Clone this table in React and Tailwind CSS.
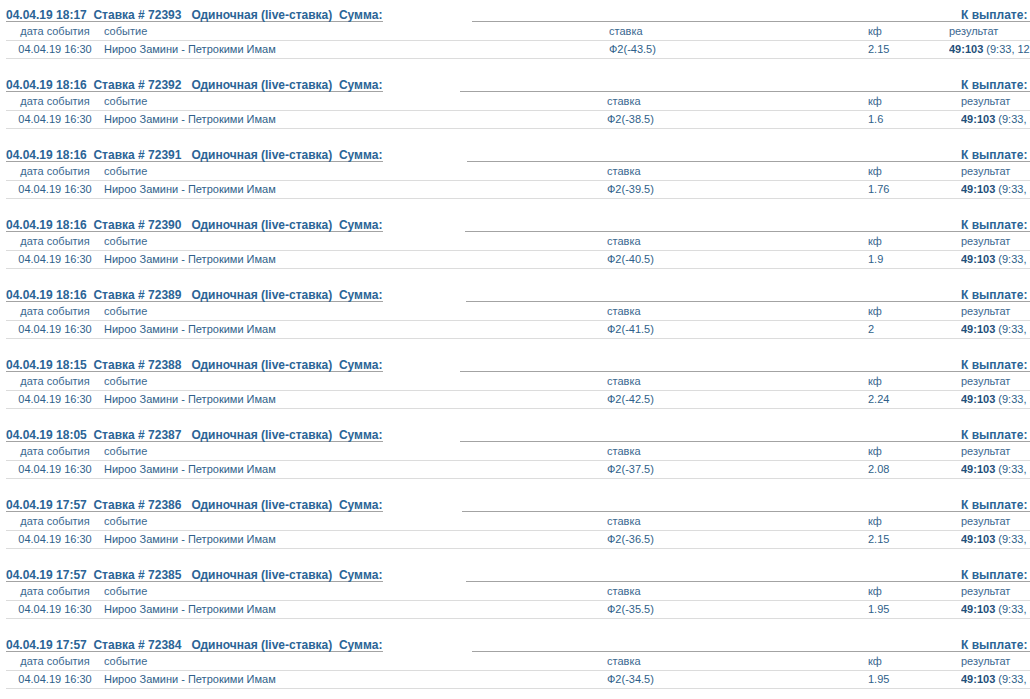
import React from "react";

const bets = [
  { t: "04.04.19 18:17", id: "72393", bet: "Ф2(-43.5)", kf: "2.15", b2: 472, c3: 609, c5: 949 },
  { t: "04.04.19 18:16", id: "72392", bet: "Ф2(-38.5)", kf: "1.6", b2: 460, c3: 607, c5: 961 },
  { t: "04.04.19 18:16", id: "72391", bet: "Ф2(-39.5)", kf: "1.76", b2: 467, c3: 607, c5: 961 },
  { t: "04.04.19 18:16", id: "72390", bet: "Ф2(-40.5)", kf: "1.9", b2: 465, c3: 607, c5: 961 },
  { t: "04.04.19 18:16", id: "72389", bet: "Ф2(-41.5)", kf: "2", b2: 466, c3: 607, c5: 961 },
  { t: "04.04.19 18:15", id: "72388", bet: "Ф2(-42.5)", kf: "2.24", b2: 460, c3: 607, c5: 961 },
  { t: "04.04.19 18:05", id: "72387", bet: "Ф2(-37.5)", kf: "2.08", b2: 460, c3: 607, c5: 961 },
  { t: "04.04.19 17:57", id: "72386", bet: "Ф2(-36.5)", kf: "2.15", b2: 462, c3: 607, c5: 961 },
  { t: "04.04.19 17:57", id: "72385", bet: "Ф2(-35.5)", kf: "1.95", b2: 466, c3: 607, c5: 961 },
  { t: "04.04.19 17:57", id: "72384", bet: "Ф2(-34.5)", kf: "1.95", b2: 472, c3: 607, c5: 961 },
];

const C4 = 868;

function Row({ b, cells, className }) {
  const cols = `98px ${b.c3 - 104}px ${C4 - b.c3}px ${b.c5 - C4}px 1fr`;
  return (
    <div
      className={`grid items-center border-b border-[#dcdcdc] text-[11px] whitespace-nowrap ${className}`}
      style={{ gridTemplateColumns: cols }}
    >
      <div className="text-center">{cells[0]}</div>
      <div>{cells[1]}</div>
      <div>{cells[2]}</div>
      <div>{cells[3]}</div>
      <div className="overflow-hidden">{cells[4]}</div>
    </div>
  );
}

function Bet({ b }) {
  return (
    <div className="pt-[6px] pb-[11px] pl-[6px]">
      <div className="flex h-[16px] items-end text-[12px] font-bold text-[#2b6496] leading-[11px] whitespace-nowrap">
        <div className="w-[377px] shrink-0 border-b border-[#a3a3a3]">
          {b.t}
          {"\u00a0\u00a0"}Ставка # {b.id}
          {"\u00a0\u00a0\u00a0"}Одиночная (live-ставка){"\u00a0\u00a0"}Сумма:
        </div>
        <div
          className="flex-1 border-b border-[#a3a3a3]"
          style={{ marginLeft: b.b2 - 383, paddingLeft: 961 - b.b2 }}
        >
          К выплате:
        </div>
      </div>
      <Row
        b={b}
        className="h-[19px] text-[#3a6890]"
        cells={["дата события", "событие", "ставка", "кф", "результат"]}
      />
      <Row
        b={b}
        className="h-[18px] text-[#2f5f8a]"
        cells={[
          "04.04.19 16:30",
          "Нироо Замини - Петрокими Имам",
          b.bet,
          b.kf,
          <>
            <span className="font-bold text-[#1f4f79]">49:103</span> (9:33, 12:25)
          </>,
        ]}
      />
    </div>
  );
}

export default function App() {
  return (
    <div
      className="w-[1030px] h-[699px] overflow-hidden bg-white"
      style={{ fontFamily: '"Liberation Sans", Arial, sans-serif' }}
    >
      {bets.map((b) => (
        <Bet key={b.id} b={b} />
      ))}
    </div>
  );
}
